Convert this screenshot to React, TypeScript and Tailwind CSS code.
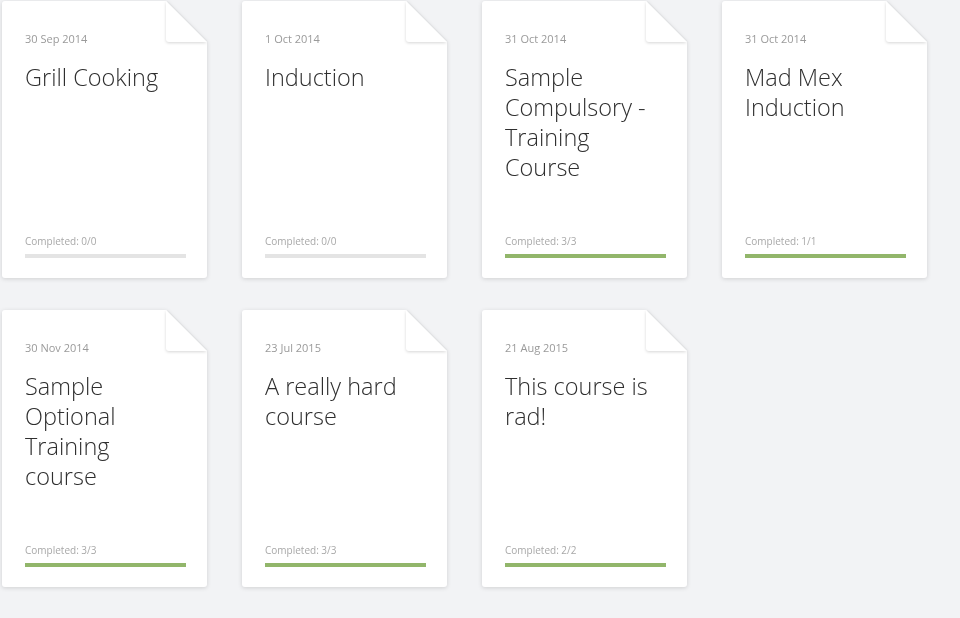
import React from "react";

type Course = { date: string; title: string; done: number; total: number };

const courses: Course[] = [
  { date: "30 Sep 2014", title: "Grill Cooking", done: 0, total: 0 },
  { date: "1 Oct 2014", title: "Induction", done: 0, total: 0 },
  { date: "31 Oct 2014", title: "Sample Compulsory - Training Course", done: 3, total: 3 },
  { date: "31 Oct 2014", title: "Mad Mex Induction", done: 1, total: 1 },
  { date: "30 Nov 2014", title: "Sample Optional Training course", done: 3, total: 3 },
  { date: "23 Jul 2015", title: "A really hard course", done: 3, total: 3 },
  { date: "21 Aug 2015", title: "This course is rad!", done: 2, total: 2 },
];

function Card({ c }: { c: Course }) {
  const pct = c.total > 0 ? (c.done / c.total) * 100 : 0;
  return (
    <div className="relative w-[205px] h-[277px] [filter:drop-shadow(0_1px_2px_rgba(0,0,0,0.14))]">
      <div className="w-full h-full bg-white rounded-[3px] [clip-path:polygon(0_0,164px_0,205px_41px,205px_100%,0_100%)] flex flex-col px-[23px] pt-[30px] pb-[20px]">
        <div className="text-[11px] leading-[16px] text-[#9a9a9a]">{c.date}</div>
        <div className="mt-[15px] text-[23.5px] leading-[30px] font-light text-[#2f2f2f] pr-[10px]">
          {c.title}
        </div>
        <div className="mt-auto text-[10px] leading-[14px] text-[#a8a8a8]">
          Completed: {c.done}/{c.total}
        </div>
        <div className="mt-[6px] w-[161px] h-[4px] bg-[#e4e4e4]">
          <div className="h-full bg-[#92b66b]" style={{ width: `${pct}%` }} />
        </div>
      </div>
      <svg
        className="absolute left-[164px] top-0 [filter:drop-shadow(0_1px_1.5px_rgba(0,0,0,0.16))]"
        width="41"
        height="41"
        viewBox="0 0 41 41"
      >
        <path d="M0 0 L41 41 L3 41 Q0 41 0 38 Z" fill="#ffffff" />
      </svg>
    </div>
  );
}

export default function App() {
  return (
    <div
      className="w-[960px] h-[618px] bg-[#f2f3f5] pl-[2px] pt-[1px]"
      style={{ fontFamily: '"Open Sans", "Noto Sans", sans-serif' }}
    >
      <div className="grid grid-cols-[205px_205px_205px_205px] gap-x-[35px] gap-y-[32px]">
        {courses.map((c, i) => (
          <Card key={i} c={c} />
        ))}
      </div>
    </div>
  );
}
